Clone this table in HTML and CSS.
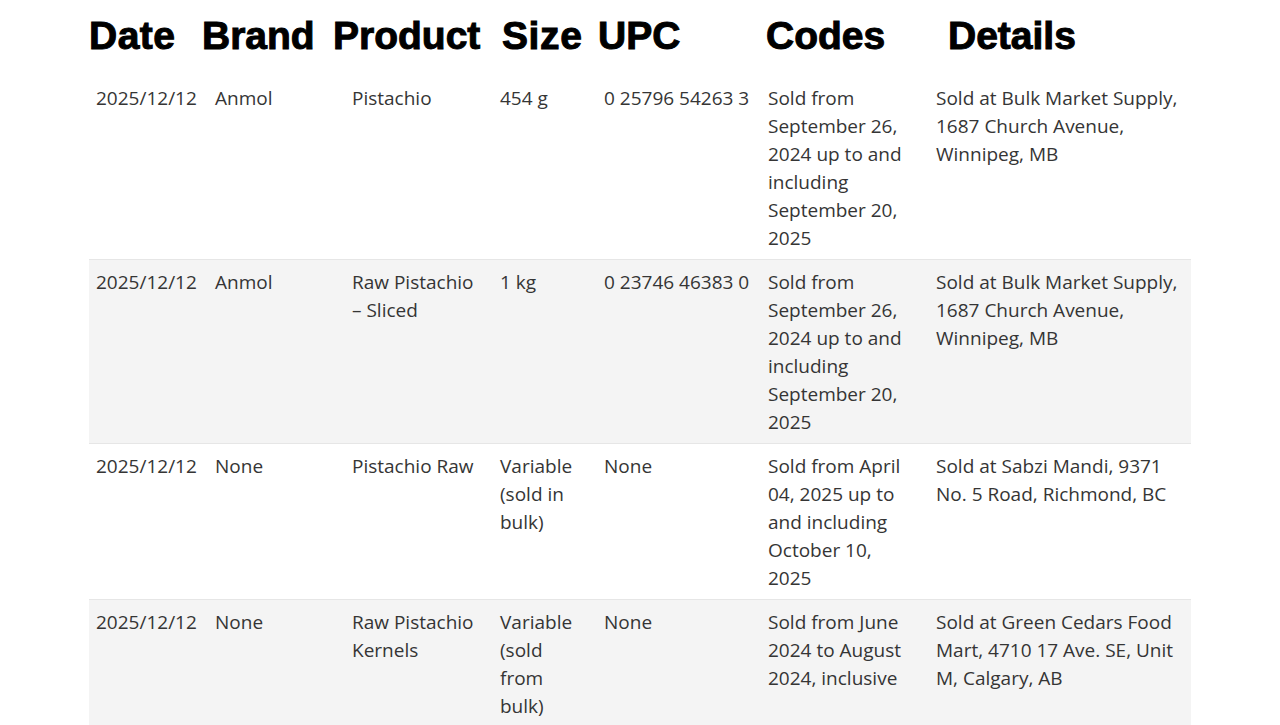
FILE: index.html
```html
<!DOCTYPE html>
<html lang="en">
<head>
<meta charset="utf-8">
<title>Recall table</title>
<link rel="stylesheet" href="styles.css">
</head>
<body>
<div class="page">
  <div class="heading">
    <span class="h-date">Date</span>
    <span class="h-brand">Brand</span>
    <span class="h-product">Product</span>
    <span class="h-size">Size</span>
    <span class="h-upc">UPC</span>
    <span class="h-codes">Codes</span>
    <span class="h-details">Details</span>
  </div>
  <table class="recalls">
    <colgroup>
      <col class="c-date">
      <col class="c-brand">
      <col class="c-product">
      <col class="c-size">
      <col class="c-upc">
      <col class="c-codes">
      <col class="c-details">
    </colgroup>
    <tbody>
      <tr>
        <td>2025/12/12</td>
        <td>Anmol</td>
        <td>Pistachio</td>
        <td>454 g</td>
        <td>0 25796 54263 3</td>
        <td class="codes">Sold from September 26, 2024 up to and including September 20, 2025</td>
        <td>Sold at Bulk Market Supply, 1687 Church Avenue, Winnipeg, MB</td>
      </tr>
      <tr>
        <td>2025/12/12</td>
        <td>Anmol</td>
        <td>Raw Pistachio – Sliced</td>
        <td>1 kg</td>
        <td>0 23746 46383 0</td>
        <td class="codes">Sold from September 26, 2024 up to and including September 20, 2025</td>
        <td>Sold at Bulk Market Supply, 1687 Church Avenue, Winnipeg, MB</td>
      </tr>
      <tr>
        <td>2025/12/12</td>
        <td>None</td>
        <td>Pistachio Raw</td>
        <td>Variable (sold in bulk)</td>
        <td>None</td>
        <td class="codes">Sold from April 04, 2025 up to and including October 10, 2025</td>
        <td>Sold at Sabzi Mandi, 9371 No. 5 Road, Richmond, BC</td>
      </tr>
      <tr>
        <td>2025/12/12</td>
        <td>None</td>
        <td>Raw Pistachio Kernels</td>
        <td>Variable (sold from bulk)</td>
        <td>None</td>
        <td class="codes">Sold from June 2024 to August 2024, inclusive</td>
        <td>Sold at Green Cedars Food Mart, 4710 17 Ave. SE, Unit M, Calgary, AB</td>
      </tr>
    </tbody>
  </table>
</div>
</body>
</html>
```
FILE: styles.css
```css
html, body {
  margin: 0;
  padding: 0;
  background: #ffffff;
}

.page {
  width: 1102px;
  margin: 0 auto;
}

.heading {
  display: grid;
  grid-template-columns: 113px 131px 169px 96px 168px 182px 1fr;
  padding: 14px 0 17px 0;
  font-family: "Liberation Sans", Arial, sans-serif;
  font-weight: bold;
  font-size: 39px;
  line-height: 44px;
  color: #000;
  -webkit-text-stroke: 1px #000;
  white-space: nowrap;
}

.h-date {
  letter-spacing: 0.5px;
}

.h-size {
  letter-spacing: 0.6px;
}

.recalls {
  width: 1102px;
  border-collapse: collapse;
  table-layout: fixed;
  font-family: "Open Sans", "Noto Sans", sans-serif;
  font-size: 19px;
  line-height: 28px;
  color: #353535;
}

.c-date { width: 119px; }
.c-brand { width: 137px; }
.c-product { width: 148px; }
.c-size { width: 104px; }
.c-upc { width: 164px; }
.c-codes { width: 168px; }
.c-details { width: 262px; }

.recalls td {
  vertical-align: top;
  padding: 8px 7px 7px 7px;
  border-top: 1px solid #e6e6e6;
  text-align: left;
}

.recalls td.codes {
  padding-right: 18px;
}

.recalls tr:first-child td {
  border-top-color: #ffffff;
}

.recalls tr:nth-child(even) td {
  background: #f4f4f4;
}
```
